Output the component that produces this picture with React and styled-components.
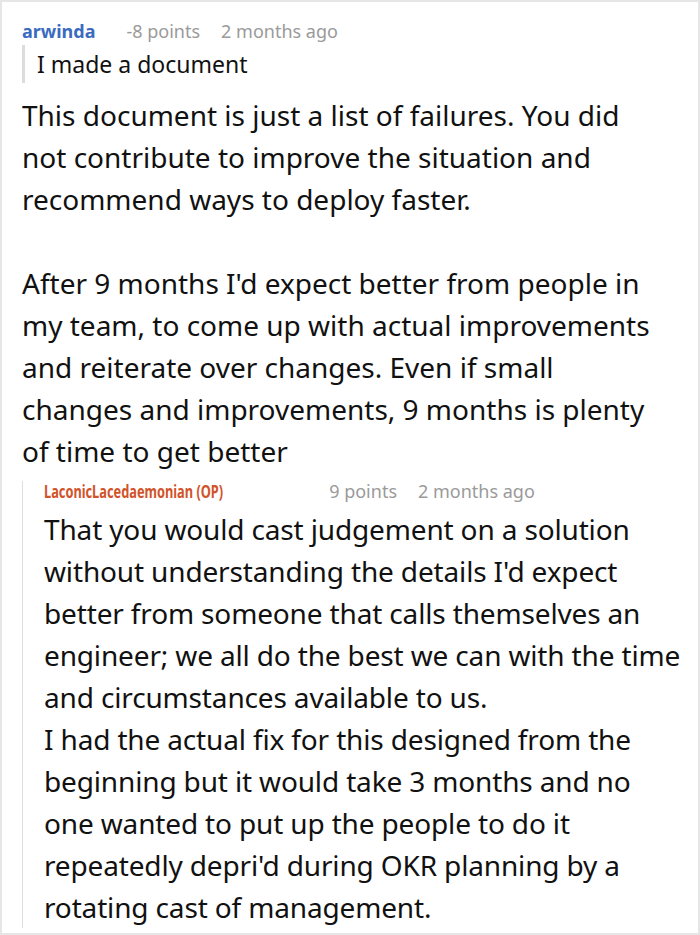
import React from 'react';
import styled, { createGlobalStyle } from 'styled-components';

const Global = createGlobalStyle`
  body {
    margin: 0;
    background: #fff;
    font-family: "Noto Sans", "Open Sans", sans-serif;
    color: #111;
  }
`;

const Frame = styled.div`
  width: 700px;
  height: 935px;
  box-sizing: border-box;
  border: 2px solid #e6e6e6;
  padding: 17px 0 0 20px;
  overflow: hidden;
`;

const Meta = styled.div`
  display: flex;
  align-items: baseline;
  gap: 21px;
  height: ${p => (p.$reply ? '20px' : '24px')};
  line-height: ${p => (p.$reply ? '20px' : '24px')};
  font-size: 18px;
  white-space: nowrap;
`;

const Author = styled.span`
  display: inline-block;
  font-weight: 700;
  color: #3b6bbf;
  margin-right: 10px;
`;

// the OP name is set in a squeezed, condensed cut
const OpAuthor = styled(Author)`
  color: #d2532a;
  font-size: 17px;
  transform: scaleX(0.752);
  transform-origin: 0 50%;
  margin-right: 26px;
`;

const Info = styled.span`
  color: #9a9a9a;
`;

const Quote = styled.blockquote`
  margin: 2px 0 0;
  border-left: 3px solid #dcdcdc;
  padding-left: 12px;
  font-size: 23px;
  line-height: 38px;
`;

const Body = styled.div`
  margin-top: 11px;
  font-size: 28px;
  line-height: 42px;

  p {
    margin: 0 0 42px;
  }

  p:last-child {
    margin-bottom: 0;
  }
`;

const Reply = styled.div`
  margin-top: 9px;
  border-left: 1px solid #dedede;
  padding-left: 21px;
`;

const ReplyBody = styled.div`
  margin-top: 7px;
  margin-bottom: -11px;
  font-size: 28px;
  letter-spacing: -0.15px;
  line-height: 42px;
  white-space: nowrap;
`;

export default function App() {
  return (
    <Frame>
      <Global />
      <Meta>
        <Author>arwinda</Author>
        <Info>-8 points</Info>
        <Info>2 months ago</Info>
      </Meta>
      <Quote>I made a document</Quote>
      <Body>
        <p>
          This document is just a list of failures. You did
          <br />
          not contribute to improve the situation and
          <br />
          recommend ways to deploy faster.
        </p>
        <p>
          After 9 months I'd expect better from people in
          <br />
          my team, to come up with actual improvements
          <br />
          and reiterate over changes. Even if small
          <br />
          changes and improvements, 9 months is plenty
          <br />
          of time to get better
        </p>
      </Body>
      <Reply>
        <Meta $reply>
          <OpAuthor>LaconicLacedaemonian (OP)</OpAuthor>
          <Info>9 points</Info>
          <Info>2 months ago</Info>
        </Meta>
        <ReplyBody>
          That you would cast judgement on a solution
          <br />
          without understanding the details I'd expect
          <br />
          better from someone that calls themselves an
          <br />
          engineer; we all do the best we can with the time
          <br />
          and circumstances available to us.
          <br />
          I had the actual fix for this designed from the
          <br />
          beginning but it would take 3 months and no
          <br />
          one wanted to put up the people to do it
          <br />
          repeatedly depri'd during OKR planning by a
          <br />
          rotating cast of management.
        </ReplyBody>
      </Reply>
    </Frame>
  );
}
